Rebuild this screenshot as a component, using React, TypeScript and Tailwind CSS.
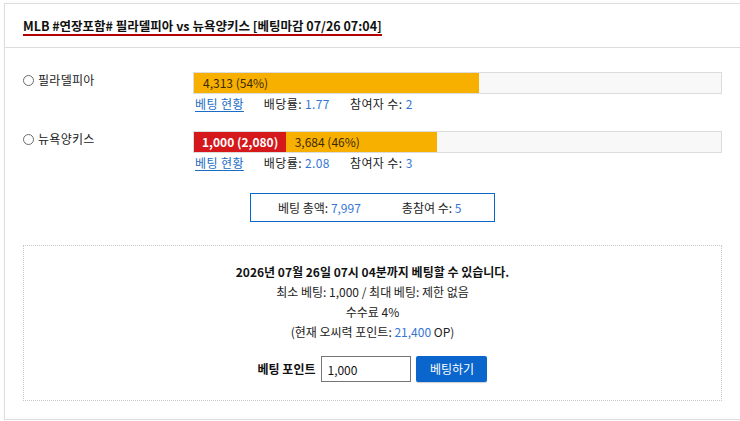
const font = { fontFamily: '"Noto Sans CJK KR", "Noto Sans", sans-serif' };

function Radio() {
  return <span className="inline-block h-[11px] w-[11px] rounded-full border border-[#6b6b6b] bg-white" />;
}

function TeamRow(props: {
  name: string;
  mine?: { label: string; pct: number };
  label: string;
  pct: number;
  odds: string;
  count: number;
}) {
  return (
    <div className="flex">
      <div className="flex w-[170px] items-center gap-[4px] self-start pt-[1px] text-[12px] leading-[14px] text-[#222]">
        <Radio />
        <span className="tracking-[0.3px]">{props.name}</span>
      </div>
      <div className="flex-1">
        <div className="flex h-[22px] border border-[#dcdcdc] bg-[#f8f8f8] text-[12px]">
          {props.mine && (
            <div
              className="flex items-center bg-[#d5181b] pl-[8px] font-bold text-white"
              style={{ width: `${props.mine.pct}%` }}
            >
              {props.mine.label}
            </div>
          )}
          <div
            className="flex items-center bg-[#f8b000] pl-[9px] text-[#3a2a00]"
            style={{ width: `${props.pct}%` }}
          >
            {props.label}
          </div>
        </div>
        <div className="flex h-[19px] items-center gap-[20px] pl-[2px] text-[12px] tracking-[0.4px] text-[#222]">
          <a href="#" className="text-[#1b6cc4] underline underline-offset-2">
            베팅 현황
          </a>
          <span>
            배당률: <span className="text-[#3476d4]">{props.odds}</span>
          </span>
          <span>
            참여자 수: <span className="text-[#3476d4]">{props.count}</span>
          </span>
        </div>
      </div>
    </div>
  );
}

export default function App() {
  return (
    <div className="h-[421px] w-[740px] overflow-hidden bg-white" style={font}>
      <div className="ml-[4px] mt-[3px] h-[417px] w-[737px] border border-[#dedede] bg-white shadow-[0_0_2px_rgba(0,0,0,0.06)]">
        <div className="flex h-[44px] items-end border-b border-[#dcdcdc] px-[18px] pb-[11px]">
          <h1 className="border-b-[2px] border-[#b30000] pb-[1px] text-[12.5px] leading-[14px] font-bold text-[#111]">
            MLB #연장포함# 필라델피아 vs 뉴욕양키스 [베팅마감 07/26 07:04]
          </h1>
        </div>

        <div className="px-[18px] pt-[24px]">
          <TeamRow name="필라델피아" label="4,313 (54%)" pct={54} odds="1.77" count={2} />
          <div className="h-[18px]" />
          <TeamRow
            name="뉴욕양키스"
            mine={{ label: "1,000 (2,080)", pct: 17.4 }}
            label="3,684 (46%)"
            pct={28.7}
            odds="2.08"
            count={3}
          />

          <div className="mt-[21px] flex justify-center">
            <div className="flex h-[29px] w-[245px] items-center gap-[41px] border border-[#0a66cc] pl-[27px] text-[12px] text-[#222]">
              <span>
                베팅 총액: <span className="text-[#3476d4]">7,997</span>
              </span>
              <span>
                총참여 수: <span className="text-[#3476d4]">5</span>
              </span>
            </div>
          </div>

          <div className="mt-[23px] flex h-[156px] flex-col items-center border border-dotted border-[#c8c8c8] pt-[16px] text-[12px] leading-[20px] text-[#222]">
            <p className="font-bold text-[#111]">2026년 07월 26일 07시 04분까지 베팅할 수 있습니다.</p>
            <p>최소 베팅: 1,000 / 최대 베팅: 제한 없음</p>
            <p>수수료 4%</p>
            <p>
              (현재 오씨력 포인트: <span className="text-[#3476d4]">21,400</span> OP)
            </p>
            <div className="mt-[14px] flex items-center gap-[5px]">
              <span className="mr-[1px] font-bold text-[#111]">베팅 포인트</span>
              <input
                defaultValue="1,000"
                className="h-[26px] w-[90px] border border-[#767676] bg-white px-[5px] text-[12px] text-[#111] outline-none"
                style={font}
              />
              <button className="h-[26px] w-[71px] rounded-[2px] bg-[#0a66cc] text-[12px] text-white shadow-[0_1px_1px_rgba(0,0,0,0.2)]">
                베팅하기
              </button>
            </div>
          </div>
        </div>
      </div>
    </div>
  );
}
